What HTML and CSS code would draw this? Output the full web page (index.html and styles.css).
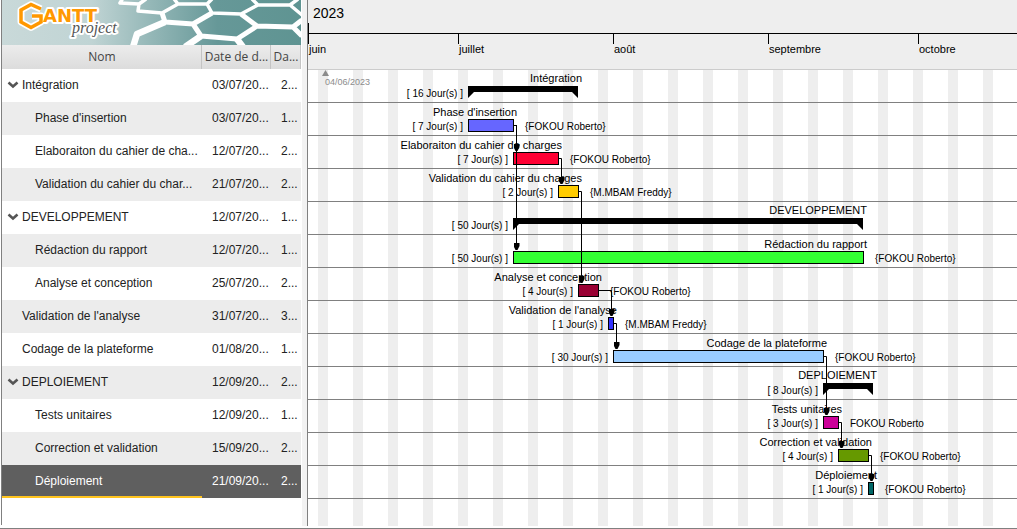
FILE: index.html
```html
<!DOCTYPE html>
<html lang="fr">
<head>
<meta charset="utf-8">
<title>GanttProject</title>
<link rel="stylesheet" href="styles.css">
</head>
<body>
<svg class="defs" width="0" height="0" aria-hidden="true"><symbol id="chevron" viewBox="0 0 12 8"><path d="M1.500 1.500 6 5.500 10.500 1.500" fill="none" stroke="#555" stroke-width="2.600"/></symbol></svg>
<div class="app">
  <aside class="sidebar">
    <svg class="banner" viewBox="2 0 299 45" preserveAspectRatio="xMinYMin slice" role="img" aria-label="GanttProject">
      <defs><linearGradient id="sea" gradientUnits="userSpaceOnUse" x1="2" y1="0" x2="301" y2="0"><stop offset="0" stop-color="#c9d9d9"/><stop offset=".3" stop-color="#c0d4d4"/><stop offset=".5" stop-color="#94b7b7"/><stop offset=".72" stop-color="#669898"/><stop offset="1" stop-color="#5f9492"/></linearGradient></defs>
      <rect x="2" width="299" height="45" fill="url(#sea)"/>
      <g fill="none" stroke="#fff" stroke-width="3.500" stroke-linejoin="round">
        <path d="M123-2 120 3 139 4 146-1M139 4 138 11 162 13 178 4 174-1M178 4 207 4 212-1M207 4 212 13 241 14 258 5 252-1M258 5 290 5 298-1M290 5 302 15"/>
        <path d="M162 13 165 22 193 24 201 36 237 39 257 26 293 27 302 20M212 13 193 24M241 14 257 26M293 27 302 36" stroke-width="5"/>
        <path d="M165 22 137 34 133 47M201 36 185 47M237 39 243 47" stroke-width="6.500"/>
      </g>
      <g stroke-linejoin="round">
        <path d="M41 9 31 4.500 21 10V22L31 27.500 41 22V16H32" fill="none" stroke="#fff" stroke-width="7"/>
        <text class="logo-main" x="43" y="22">ANTT</text>
        <path d="M41 9 31 4.500 21 10V22L31 27.500 41 22V16H32" fill="none" stroke="#ff9800" stroke-width="3.500" stroke-linejoin="miter"/>
        <text class="logo-sub" x="72" y="33">project</text>
      </g>
    </svg>
    <table class="tasks">
      <colgroup><col class="col-name"><col class="col-start"><col class="col-end"></colgroup>
      <thead><tr><th>Nom</th><th>Date de d...</th><th>Da...</th></tr></thead>
      <tbody>
        <tr><td><button class="toggle" aria-label="Réduire Intégration"><svg><use href="#chevron"/></svg></button>Intégration</td><td>03/07/20...</td><td>2...</td></tr>
        <tr><td class="child">Phase d'insertion</td><td>03/07/20...</td><td>1...</td></tr>
        <tr><td class="child">Elaboraiton du cahier de cha...</td><td>12/07/20...</td><td>2...</td></tr>
        <tr><td class="child">Validation du cahier du char...</td><td>21/07/20...</td><td>2...</td></tr>
        <tr><td><button class="toggle" aria-label="Réduire DEVELOPPEMENT"><svg><use href="#chevron"/></svg></button>DEVELOPPEMENT</td><td>12/07/20...</td><td>1...</td></tr>
        <tr><td class="child">Rédaction du rapport</td><td>12/07/20...</td><td>1...</td></tr>
        <tr><td class="child">Analyse et conception</td><td>25/07/20...</td><td>2...</td></tr>
        <tr><td class="leaf">Validation de l'analyse</td><td>31/07/20...</td><td>3...</td></tr>
        <tr><td class="leaf">Codage de la plateforme</td><td>01/08/20...</td><td>1...</td></tr>
        <tr><td><button class="toggle" aria-label="Réduire DEPLOIEMENT"><svg><use href="#chevron"/></svg></button>DEPLOIEMENT</td><td>12/09/20...</td><td>2...</td></tr>
        <tr><td class="child">Tests unitaires</td><td>12/09/20...</td><td>1...</td></tr>
        <tr><td class="child">Correction et validation</td><td>15/09/20...</td><td>2...</td></tr>
        <tr class="selected"><td class="child">Déploiement</td><td>21/09/20...</td><td>2...</td></tr>
      </tbody>
    </table>
  </aside>
  <div class="splitter"></div>
  <main class="chart">
    <header class="timeline">
      <div class="year">2023</div>
      <div class="months">
        <span class="month" style="--days:30">juin</span>
        <span class="month" style="--days:31">juillet</span>
        <span class="month" style="--days:31">août</span>
        <span class="month" style="--days:30">septembre</span>
        <span class="month" style="--days:31">octobre</span>
      </div>
    </header>
    <div class="canvas">
      <div class="marker"><svg width="7" height="7" viewBox="0 0 7 7"><path d="M3.500 0 7 6H0z" fill="#8c8c8c"/></svg><span>04/06/2023</span></div>
      <div class="row"><div class="bar group" style="--start:32;--days:22"><span class="name">Intégration</span><span class="time">[ 16 Jour(s) ]</span></div></div>
      <div class="row"><div class="bar" style="--start:32;--days:9;--fill:#6666ff"><span class="name">Phase d'insertion</span><span class="time">[ 7 Jour(s) ]</span><span class="who">{FOKOU Roberto}</span></div></div>
      <div class="row"><div class="bar" style="--start:41;--days:9;--fill:#ff0033"><span class="name">Elaboraiton du cahier de charges</span><span class="time">[ 7 Jour(s) ]</span><span class="who">{FOKOU Roberto}</span></div></div>
      <div class="row"><div class="bar" style="--start:50;--days:4;--fill:#ffcc00"><span class="name">Validation du cahier du charges</span><span class="time">[ 2 Jour(s) ]</span><span class="who">{M.MBAM Freddy}</span></div></div>
      <div class="row"><div class="bar group" style="--start:41;--days:70"><span class="name">DEVELOPPEMENT</span><span class="time">[ 50 Jour(s) ]</span></div></div>
      <div class="row"><div class="bar" style="--start:41;--days:70;--fill:#33ff33"><span class="name">Rédaction du rapport</span><span class="time">[ 50 Jour(s) ]</span><span class="who">{FOKOU Roberto}</span></div></div>
      <div class="row"><div class="bar" style="--start:54;--days:4;--fill:#990033"><span class="name">Analyse et conception</span><span class="time">[ 4 Jour(s) ]</span><span class="who">{FOKOU Roberto}</span></div></div>
      <div class="row"><div class="bar" style="--start:60;--days:1;--fill:#3333ff"><span class="name">Validation de l'analyse</span><span class="time">[ 1 Jour(s) ]</span><span class="who">{M.MBAM Freddy}</span></div></div>
      <div class="row"><div class="bar" style="--start:61;--days:42;--fill:#99ccff"><span class="name">Codage de la plateforme</span><span class="time">[ 30 Jour(s) ]</span><span class="who">{FOKOU Roberto}</span></div></div>
      <div class="row"><div class="bar group" style="--start:103;--days:10"><span class="name">DEPLOIEMENT</span><span class="time">[ 8 Jour(s) ]</span></div></div>
      <div class="row"><div class="bar" style="--start:103;--days:3;--fill:#cc0099"><span class="name">Tests unitaires</span><span class="time">[ 3 Jour(s) ]</span><span class="who">FOKOU Roberto</span></div></div>
      <div class="row"><div class="bar" style="--start:106;--days:6;--fill:#669900"><span class="name">Correction et validation</span><span class="time">[ 4 Jour(s) ]</span><span class="who">{FOKOU Roberto}</span></div></div>
      <div class="row"><div class="bar" style="--start:112;--days:1;--fill:#006666"><span class="name">Déploiement</span><span class="time">[ 1 Jour(s) ]</span><span class="who">{FOKOU Roberto}</span></div></div>
      <svg class="links" width="709" height="456" viewBox="308 70 709 456" aria-hidden="true">
        <defs><marker id="head" markerUnits="userSpaceOnUse" markerWidth="6" markerHeight="8" refX="3" refY="7" viewBox="0 0 6 8"><path d="M0 0H6V3L4 7H2L0 3z"/></marker></defs>
        <g fill="none" stroke="#000">
          <path d="M514 125.500H516.500V151" marker-end="url(#head)"/>
          <path d="M516.500 125V250" marker-end="url(#head)"/>
          <path d="M559 158.500H561.500V184" marker-end="url(#head)"/>
          <path d="M579 191.500H581.500V283" marker-end="url(#head)"/>
          <path d="M599 290.500H611.500V316" marker-end="url(#head)"/>
          <path d="M614 323.500H616.500V349" marker-end="url(#head)"/>
          <path d="M824 356.500H826.500V415" marker-end="url(#head)"/>
          <path d="M839 422.500H841.500V448" marker-end="url(#head)"/>
          <path d="M869 455.500H871.500V481" marker-end="url(#head)"/>
        </g>
      </svg>
    </div>
  </main>
</div>
</body>
</html>
```
FILE: styles.css
```css
* { box-sizing: border-box; }
html { height: 100%; }
body {
  margin: 0;
  height: 100%;
  background: #fff;
  color: #000;
  font-family: "Liberation Sans", Arial, sans-serif;
  overflow: hidden;
}
.defs { position: absolute; }
.app {
  display: flex;
  height: 100%;
  padding-bottom: 3px;
  background: linear-gradient(#808080, #808080) left 0 bottom 0 / 100% 1px no-repeat;
}

/* Task list */
.sidebar {
  flex: none;
  width: 301px;
  margin-bottom: 1px;
  padding-left: 1px;
  background: linear-gradient(#808080, #808080) 1px 0 / 1px 100% no-repeat;
}
.banner { display: block; width: 299px; height: 45px; margin-left: 1px; }
.logo-main {
  font: bold 18px "DejaVu Sans", sans-serif;
  fill: #ff9800;
  stroke: #fff;
  stroke-width: 4px;
  paint-order: stroke;
}
.logo-sub {
  font: italic 16px "Liberation Serif", serif;
  fill: #555;
  stroke: #fff;
  stroke-width: 4px;
  paint-order: stroke;
}
.tasks {
  width: 299px;
  margin-left: 1px;
  table-layout: fixed;
  border-collapse: collapse;
  font-size: 12px;
  color: #222;
}
.col-name { width: 200px; }
.col-start { width: 69px; }
.col-end { width: 30px; }
.tasks th {
  height: 24px;
  padding: 0 1px;
  background: linear-gradient(#ececec, #dcdcdc);
  box-shadow: inset -1px 0 #c4c4c4;
  color: #444;
  font: 12px "Open Sans", sans-serif;
  line-height: 18px;
  white-space: nowrap;
}
.tasks td {
  height: 33px;
  padding: 0 0 2px 10px;
  line-height: 14px;
  white-space: nowrap;
}
.tasks td:first-child { padding-left: 5px; }
.tasks td.leaf { padding-left: 20px; }
.tasks td.child { padding-left: 33px; }
.tasks tbody tr:nth-child(even) { background: #ececec; }
.tasks tbody tr.selected { background: #5f5f5f; color: #fff; }
.tasks .selected td:first-child { box-shadow: inset 0 -2px #ffc41f; }
.toggle {
  width: 12px;
  height: 8px;
  margin: 0 3px 0 0;
  padding: 0;
  border: 0;
  background: none;
}
.toggle svg { display: block; width: 12px; height: 8px; }
.splitter { flex: none; width: 6px; border-left: 1px solid #fff; background: #f2f2f2; }

/* Chart */
.chart {
  --day: 5px;
  flex: 1;
  min-width: 0;
  display: flex;
  flex-direction: column;
  border-left: 1px solid #808080;
  overflow: hidden;
}
.timeline {
  flex: none;
  height: 70px;
  background: #eee;
  border-bottom: 1px solid #ccc;
}
.year {
  height: 33px;
  padding: 5px;
  font-size: 14px;
  line-height: 17px;
  background: linear-gradient(#000, #000) 0 23px / 1px 10px no-repeat;
}
.months { display: flex; border-top: 1px solid #000; }
.month {
  flex: none;
  width: calc(var(--days) * var(--day));
  padding: 9px 1px 0;
  font-size: 11px;
  line-height: 13px;
  background: linear-gradient(#000, #000) 0 0 / 1px 10px no-repeat;
}
.canvas {
  position: relative;
  flex: 1;
  min-height: 0;
  background: repeating-linear-gradient(90deg, #fff 0 10px, #eee 10px 20px, #fff 20px 35px);
}
.marker {
  position: absolute;
  left: 14px;
  top: 0;
  color: #8c8c8c;
  font-size: 9px;
  line-height: 10px;
}
.marker svg, .marker span { display: block; }
.marker span { padding-left: 3px; }
.row { position: relative; height: 33px; border-bottom: 1px solid #808080; }
.bar {
  position: absolute;
  left: calc(var(--start) * var(--day));
  top: 16px;
  width: calc(var(--days) * var(--day) + 1px);
  height: 13px;
  border: 1px solid #000;
  background: var(--fill);
  font-size: 10px;
  line-height: 12px;
  white-space: nowrap;
}
.bar.group {
  width: calc(var(--days) * var(--day));
  border: 0;
  background: none;
}
.bar.group::before {
  content: "";
  position: absolute;
  inset: 0;
  background: #000;
  clip-path: polygon(0 0, 100% 0, 100% 12px, calc(100% - 6px) 6px, 6px 6px, 0 12px);
}
.name, .time, .who { position: absolute; }
.name { right: -4px; bottom: calc(100% + 2px); font-size: 11px; }
.time { right: calc(100% + 6px); top: 1px; }
.group .time { right: calc(100% + 5px); top: 2px; }
.who { left: calc(100% + 12px); top: 1px; }
.links { position: absolute; left: 0; top: 0; }
```
